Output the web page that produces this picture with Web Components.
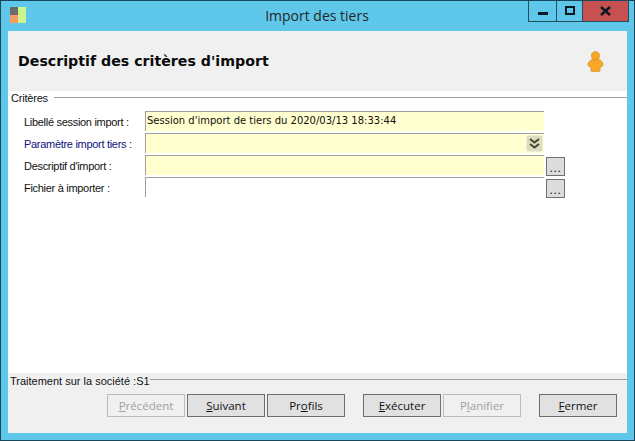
<!DOCTYPE html>
<html lang="fr">
<head>
<meta charset="utf-8">
<title>Import des tiers</title>
<style>
    html, body { margin: 0; padding: 0; background: #5fc8ea; }
</style>
</head>
<body>
<import-window>
    <title-bar slot="title">Import des tiers</title-bar>
    <wizard-header slot="header">Descriptif des critères d'import</wizard-header>
    <group-line slot="body" label="Critères"></group-line>
    <field-row slot="body" label="Libellé session import :" fill value="Session d'import de tiers du 2020/03/13 18:33:44"></field-row>
    <field-row slot="body" label="Paramètre import tiers :" fill combo link></field-row>
    <field-row slot="body" label="Descriptif d'import :" fill browse></field-row>
    <field-row slot="body" label="Fichier à importer :" browse></field-row>
    <wizard-footer slot="footer" label="Traitement sur la société :S1">
        <push-button disabled><u>P</u>récédent</push-button>
        <push-button><u>S</u>uivant</push-button>
        <push-button>Pr<u>o</u>fils</push-button>
        <push-button class="gap"><u>E</u>xécuter</push-button>
        <push-button disabled>P<u>l</u>anifier</push-button>
        <push-button class="gap"><u>F</u>ermer</push-button>
    </wizard-footer>
</import-window>

<script>
class ImportWindow extends HTMLElement {
    constructor() {
        super();
        this.attachShadow({ mode: "open" }).innerHTML = `
        <style>
            :host {
                display: flex;
                flex-direction: column;
                box-sizing: border-box;
                width: 635px;
                height: 441px;
                overflow: hidden;
                border: 1px solid #17475a;
                background: #5fc8ea;
            }
            .client {
                flex: 1;
                display: flex;
                flex-direction: column;
                margin: 0 7px 7px 7px;
                min-height: 0;
                background: #fff;
            }
            .body {
                flex: 1;
                display: flex;
                flex-direction: column;
            }
        </style>
        <slot name="title"></slot>
        <div class="client">
            <slot name="header"></slot>
            <div class="body"><slot name="body"></slot></div>
            <slot name="footer"></slot>
        </div>`;
    }
}

class TitleBar extends HTMLElement {
    constructor() {
        super();
        this.attachShadow({ mode: "open" }).innerHTML = `
        <style>
            :host {
                display: flex;
                position: relative;
                height: 30px;
                flex: none;
                justify-content: center;
                color: #262626;
                font: 14px "Open Sans", "Noto Sans", sans-serif;
            }
            .caption { line-height: 30px; margin-right: 1px; }
            .logo {
                position: absolute;
                left: 9px;
                top: 6px;
                display: block;
            }
            .controls {
                position: absolute;
                right: 5px;
                top: -1px;
                display: flex;
                height: 21px;
                border: 1px solid #234c5e;
                border-top: 0;
            }
            .controls div {
                display: flex;
                align-items: center;
                justify-content: center;
                box-sizing: border-box;
            }
            .min { width: 28px; border-right: 1px solid #234c5e; }
            .max { width: 26px; border-right: 1px solid #234c5e; }
            .close { width: 45px; background: #c75050; }
        </style>
        <svg class="logo" width="16" height="16" viewBox="0 0 16 16">
            <rect x="0" y="0" width="8" height="8" fill="#6b6b6b"/>
            <rect x="0" y="8" width="8" height="8" fill="#fb9a5e"/>
            <rect x="8" y="0" width="8" height="16" fill="#c9f58c"/>
        </svg>
        <span class="caption"><slot></slot></span>
        <div class="controls">
            <div class="min"><svg width="10" height="10" viewBox="0 0 10 10"><rect y="6" width="10" height="3" fill="#0a1a22"/></svg></div>
            <div class="max"><svg width="10" height="10" viewBox="0 0 10 10"><path d="M1 1h8v7H1z" fill="none" stroke="#0a1a22" stroke-width="2"/></svg></div>
            <div class="close"><svg width="11" height="10" viewBox="0 0 11 10"><path d="M1 1l9 8M10 1l-9 8" stroke="#0a1a22" stroke-width="2.4" fill="none"/></svg></div>
        </div>`;
    }
}

class WizardHeader extends HTMLElement {
    constructor() {
        super();
        this.attachShadow({ mode: "open" }).innerHTML = `
        <style>
            :host {
                display: flex;
                flex: none;
                align-items: center;
                justify-content: space-between;
                box-sizing: border-box;
                height: 60px;
                padding: 0 23px 0 10px;
                background: #f0f0f0;
                color: #0a0a0a;
                font: bold 14.2px "DejaVu Sans", Verdana, sans-serif;
            }
            svg { display: block; }
        </style>
        <span><slot></slot></span>
        <svg width="17" height="21" viewBox="0 0 17 21">
            <path d="M5.5 8.5C3.5 8.5 2.5 10 1.500 11.500.5 13 .8 14.500 2 15.500L4 16.500V19.500Q4 20.500 5 20.500H12Q13 20.500 13 19.500V16.500L15 15.500C16.200 14.500 16.500 13 15.500 11.500 14.500 10 13.500 8.500 11.500 8.500Z" fill="#f9a825" stroke="#c98a2e" stroke-width=".6"/>
            <circle cx="8.5" cy="4.8" r="4.2" fill="#f6a623" stroke="#c98a2e" stroke-width=".6"/>
        </svg>`;
    }
}

class GroupLine extends HTMLElement {
    constructor() {
        super();
        this.attachShadow({ mode: "open" }).innerHTML = `
        <style>
            :host {
                display: flex;
                align-items: center;
                gap: 6px;
                height: 13px;
                margin: 0 0 7px 3px;
                color: #111;
                font: 11px "Liberation Sans", Arial, sans-serif;
                letter-spacing: -.2px;
            }
            i { flex: 1; height: 1px; background: #a0a0a0; }
        </style>
        <span>${this.getAttribute("label")}</span><i></i>`;
    }
}

class FieldRow extends HTMLElement {
    constructor() {
        super();
        const fill = this.hasAttribute("fill") ? "#ffffcf" : "#fff";
        const color = this.hasAttribute("link") ? "#10107c" : "#111";
        const combo = this.hasAttribute("combo") ? `
            <svg class="combo" width="17" height="17" viewBox="0 0 17 17">
                <rect x=".5" y=".5" width="16" height="16" rx="2" fill="#dcdcbc" stroke="#ecece0"/>
                <path d="M4 4l4.500 3.500L13 4M4 9l4.500 3.500L13 9" fill="none" stroke="#45453c" stroke-width="2"/>
            </svg>` : "";
        const browse = this.hasAttribute("browse") ? `<button>...</button>` : "";
        this.attachShadow({ mode: "open" }).innerHTML = `
        <style>
            :host {
                display: grid;
                grid-template-columns: 121px 399px 21px;
                grid-template-rows: 20px;
                height: 20px;
                margin: 0 0 2px 16px;
                font: 11px "Liberation Sans", Arial, sans-serif;
                letter-spacing: -.3px;
            }
            label { color: ${color}; line-height: 23px; white-space: nowrap; }
            .input {
                position: relative;
                box-sizing: border-box;
                border-top: 1px solid #a0a0a0;
                border-left: 1px solid #a0a0a0;
                background: ${fill};
                padding-left: 1px;
                color: #111;
                font: 10px/17px "DejaVu Sans", Verdana, sans-serif;
                letter-spacing: 0;
                white-space: nowrap;
            }
            .combo { position: absolute; right: 1px; top: 1px; }
            button {
                box-sizing: border-box;
                align-self: start;
                width: 19px;
                height: 19px;
                margin: 2px 0 0 2px;
                padding: 0;
                border: 1px solid #707070;
                background: #dcdcdc;
                color: #111;
                font: 12px/20px "Liberation Sans", Arial, sans-serif;
                letter-spacing: .6px;
            }
        </style>
        <label>${this.getAttribute("label")}</label>
        <div class="input">${this.getAttribute("value") || ""}${combo}</div>
        ${browse}`;
    }
}

class WizardFooter extends HTMLElement {
    constructor() {
        super();
        this.attachShadow({ mode: "open" }).innerHTML = `
        <style>
            :host {
                display: block;
                flex: none;
                box-sizing: border-box;
                height: 60px;
                padding-left: 2px;
                background: #f0f0f0;
                color: #111;
                font: 11px "Liberation Sans", Arial, sans-serif;
            }
            .legend {
                display: flex;
                align-items: center;
                height: 14px;
            }
            .legend span { margin-top: 2px; }
            .legend i { flex: 1; height: 1px; background: #a0a0a0; margin-top: -2px; }
            .buttons {
                display: flex;
                gap: 2px;
                margin: 7px 0 0 97px;
            }
        </style>
        <div class="legend"><span>${this.getAttribute("label")}</span><i></i></div>
        <div class="buttons"><slot></slot></div>`;
    }
}

class PushButton extends HTMLElement {
    constructor() {
        super();
        this.attachShadow({ mode: "open" }).innerHTML = `
        <style>
            :host {
                display: flex;
                align-items: center;
                justify-content: center;
                box-sizing: border-box;
                width: 78px;
                height: 23px;
                border: 1px solid #6e6e6e;
                background: #e1e1e1;
                color: #111;
                font: 11.5px "Open Sans", "Noto Sans", sans-serif;
            }
            :host([disabled]) {
                border-color: #bcbcbc;
                background: #f0f0f0;
                color: #a0a0a0;
            }
            :host(.gap) { margin-left: 16px; }
        </style>
        <slot></slot>`;
    }
}

customElements.define("import-window", ImportWindow);
customElements.define("title-bar", TitleBar);
customElements.define("wizard-header", WizardHeader);
customElements.define("group-line", GroupLine);
customElements.define("field-row", FieldRow);
customElements.define("wizard-footer", WizardFooter);
customElements.define("push-button", PushButton);
</script>
</body>
</html>
